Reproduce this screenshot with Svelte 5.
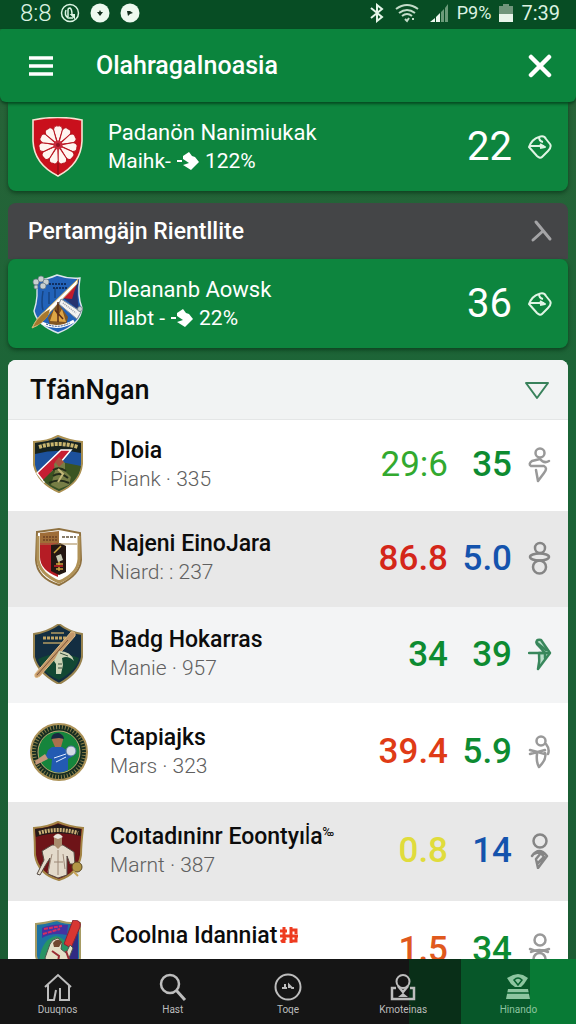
<script>
  const matches = [
    { id: 'flower', name: 'Padanön Nanimiukak', label: 'Maihk-', percent: '122%', score: 22 },
    { id: 'sash', name: 'Dleananb Aowsk', label: 'Illabt -', percent: '22%', score: 36 }
  ];

  const teams = [
    { id: 'tricolor', name: 'Dloia', rank: 'Piank · 335', rate: '29:6', rateColor: 'lime', points: '35', pointsColor: 'green', mark: 'drop', shade: 'white', size: 'small' },
    { id: 'split', name: 'Najeni EinoJara', rank: 'Niard: : 237', rate: '86.8', rateColor: 'red', points: '5.0', pointsColor: 'blue', mark: 'rings', shade: 'gray', size: 'medium' },
    { id: 'bat', name: 'Badg Hokarras', rank: 'Manie · 957', rate: '34', rateColor: 'green', points: '39', pointsColor: 'green', mark: 'arrow', shade: 'light', size: 'medium' },
    { id: 'round', name: 'Ctapiajks', rank: 'Mars · 323', rate: '39.4', rateColor: 'orange', points: '5.9', pointsColor: 'green', mark: 'leaf', shade: 'white', size: 'large' },
    { id: 'player', name: 'Coıtadıninr Eoontyıl̇a', sup: '‰', rank: 'Marnt · 387', rate: '0.8', rateColor: 'yellow', points: '14', pointsColor: 'blue', mark: 'pen', shade: 'gray', size: 'large' },
    { id: 'rainbow', name: 'Coolnıa Idanniat', badge: true, rank: '', rate: '1.5', rateColor: 'amber', points: '34', pointsColor: 'green', mark: 'tie', shade: 'white', size: 'large' }
  ];

  const tabs = [
    { id: 'home', label: 'Duuqnos' },
    { id: 'search', label: 'Hast' },
    { id: 'live', label: 'Toqe' },
    { id: 'profile', label: 'Kmoteinas' },
    { id: 'club', label: 'Hinando' }
  ];

  const petals = [0, 33, 65, 98, 131, 164, 196, 229, 262, 295, 327];

  let active = $state('club');
</script>

{#snippet crest(id)}
  <svg class="crest" viewBox="0 0 60 60" aria-hidden="true">
    {#if id === 'flower'}
      <path d="M5 3Q30-2 54 3V24Q53 47 30 59Q6 47 5 24Z" fill="#c9101c" stroke="#f6e3d2" stroke-width="1.6" />
      <path d="M30 42V58" stroke="#7d0a12" stroke-width="1" />
      {#each petals as angle}
        <path d="M30 27L25.500 13Q26 8 30 9Q34 8 34.500 13Z" fill="#fff5f0" stroke="#b8141f" stroke-width="1" transform="rotate({angle} 30 28)" />
      {/each}
      <circle cx="30" cy="28" r="4.6" fill="#c8283a" />
      <circle cx="30" cy="28" r="2" fill="#8e1523" />
    {:else if id === 'sash'}
      <path d="M8 7Q20 5 29 1Q40 5 52 4Q49 22 54 34Q53 50 30 59Q9 51 6 37Q11 22 8 7Z" fill="#2262b8" stroke="#dbe5ee" stroke-width="1.4" />
      <path d="M51 5L35 24L51 36Q48 18 51 5Z" fill="#26336f" />
      <path d="M50 6L33 24L44 25Z" fill="#c31b2c" />
      <path d="M15 17Q13 30 15 36M21 18V30M27 14V24" stroke="#174584" stroke-width="1.5" fill="none" />
      <path d="M21 10H38M25 14H39" stroke="#102f63" stroke-width="2" stroke-dasharray="2 1" />
      <path d="M4 54Q9 43 17 37L50 5L49 10L22 38Q15 50 4 54Z" fill="#fff" stroke="#d3b66b" stroke-width="1" />
      <path d="M5 53Q9 44 17 38L22 35L20 42Q14 50 5 53Z" fill="#a7782d" />
      <path d="M20 44L30 29L40 43L38 51H22Z" fill="#805522" />
      <path d="M22 47L26 35L30 42L34 35L38 48Z" fill="#dda545" />
      <path d="M30 28V48M27 36L35 45" stroke="#5a2d18" stroke-width="1.5" />
      <path d="M33 25L53 38L49 45L31 30Z" fill="#f3f3f2" stroke="#888f98" stroke-width="1" />
      <path d="M35 29L48 39" stroke="#9a9faa" stroke-width="1.5" stroke-dasharray="1 1" />
      <path d="M14 49Q30 57 46 47" stroke="#fff" stroke-width="3" fill="none" />
      <path d="M18 50Q30 55 42 49" stroke="#21427b" stroke-width="1" stroke-dasharray="2 1" fill="none" />
      <g fill="#c8d0d0" stroke="#657783" stroke-width=".7">
        <circle cx="8" cy="8" r="3" /><circle cx="13" cy="5" r="3" /><circle cx="18" cy="8" r="3" />
        <circle cx="8" cy="13" r="2" /><circle cx="15" cy="12" r="3" /><circle cx="52" cy="35" r="2.5" />
      </g>
    {:else if id === 'tricolor'}
      <path d="M6 7Q19 7 30 1Q42 6 54 7V29Q52 48 31 57Q10 48 6 30Z" fill="#1c519c" stroke="#aa9051" stroke-width="2" />
      <path d="M7 8Q19 7 30 3Q42 7 53 8V18Q30 13 7 19Z" fill="#17231f" />
      <path d="M11 12Q30 6 50 12" stroke="#c9b66f" stroke-width="4" stroke-dasharray="3 1" fill="none" />
      <path d="M33 15H43L16 47L9 38Z" fill="#c61e33" stroke="#fff" stroke-width="1.5" />
      <path d="M33 27L53 31Q50 48 31 56Q20 51 15 45Z" fill="#3b5422" />
      <path d="M23 50L27 36L26 29L31 23L37 28L37 36L43 42L41 50L31 54Z" fill="#777e46" />
      <path d="M27 27L31 22L36 27L31 32Z" fill="#a8503f" />
      <path d="M25 35Q31 31 38 36M25 41Q32 36 40 43M21 48Q31 43 41 48" stroke="#242d1b" stroke-width="2" fill="none" />
      <path d="M30 34L35 39L30 47" stroke="#c3b879" stroke-width="2" fill="none" />
    {:else if id === 'split'}
      <path d="M9 4L31 1L52 5L53 32Q52 47 31 57Q9 50 8 32Z" fill="#fff" stroke="#8f7140" stroke-width="2" />
      <path d="M12 15H30V49Q12 42 12 29Z" fill="#b51c25" />
      <path d="M12 5L31 3V15H12Z" fill="#9f6d38" />
      <path d="M15 9H29M15 12H29" stroke="#6e4123" stroke-width="1.5" stroke-dasharray="2 1" />
      <path d="M34 9H48" stroke="#887d6a" stroke-width="2" stroke-dasharray="3 1" />
      <path d="M23 17L32 15L38 18V44L31 47L23 43Z" fill="#241713" />
      <path d="M26 25L33 18M28 36H35M28 41H35M31 27V43" stroke="#d0a640" stroke-width="1.5" />
      <path d="M28 28L33 26L35 32L30 34Z" fill="#c9cbb8" />
      <path d="M26 38H35" stroke="#a21d20" stroke-width="2" />
      <path d="M10 8V32Q12 46 31 54Q50 46 51 31V8" fill="none" stroke="#b09257" stroke-width="3" />
      <path d="M12 16H49" stroke="#a2834d" stroke-width="1" />
    {:else if id === 'bat'}
      <path d="M6 10Q20 8 31 0Q41 8 54 10V33Q51 49 31 60Q10 49 6 33Z" fill="#132e41" stroke="#98834f" stroke-width="2" />
      <path d="M10 35Q31 25 51 34Q49 46 31 56Q14 49 10 35Z" fill="#124833" />
      <path d="M15 14H40" stroke="#c0a464" stroke-width="3" stroke-dasharray="3 1" />
      <path d="M23 9H36M15 19H36" stroke="#b39b61" stroke-width="1.5" />
      <path d="M43 8Q48 7 47 12L12 52Q6 56 7 50Z" fill="#c4996a" stroke="#e0bd86" stroke-width="1" />
      <path d="M9 51L40 16" stroke="#775239" stroke-width="1" />
      <path d="M31 27Q43 27 46 37Q40 31 34 34L35 41L33 50H28L28 40L26 37Z" fill="#cdd4b7" />
      <path d="M32 29L40 32M30 40H34M30 44H34" stroke="#39503d" stroke-width="1" />
    {:else if id === 'round'}
      <circle cx="31" cy="30" r="28" fill="#172d21" stroke="#ad9359" stroke-width="2" />
      <circle cx="31" cy="30" r="25" fill="none" stroke="#8c804b" stroke-width="4" stroke-dasharray="1 2" />
      <circle cx="31" cy="30" r="21" fill="#16853c" stroke="#bdac72" stroke-width="1" />
      <path d="M24 25L34 25L40 29L46 28L45 34L40 37V48Q30 53 23 48L24 37L17 36L20 28Z" fill="#235ab2" />
      <path d="M24 18Q25 12 31 12Q36 12 35 18L33 25H27Z" fill="#a9704e" />
      <path d="M23 17Q24 10 31 11Q36 13 36 17L31 16Z" fill="#172840" />
      <path d="M17 32L7 39L8 43L20 37Z" fill="#c4977b" />
      <circle cx="43" cy="29" r="5" fill="#d5dbe5" stroke="#5676a0" />
      <path d="M26 36L38 32M28 40L38 35" stroke="#e3ecff" stroke-width="1" />
    {:else if id === 'player'}
      <path d="M6 7Q20 6 30 1Q42 6 55 7Q53 24 53 34Q50 53 31 59Q10 53 7 34Q7 22 6 7Z" fill="#6e1418" stroke="#a28445" stroke-width="2" />
      <path d="M7 8Q20 7 30 3Q42 7 53 8V15Q30 9 8 16Z" fill="#241a18" />
      <path d="M11 12Q30 6 50 12" stroke="#cbb177" stroke-width="4" stroke-dasharray="2 1" fill="none" />
      <path d="M24 24L35 24L46 31L47 43L42 43L39 35L39 54L30 57L20 53L22 37L17 45L12 54L9 53L16 39L14 30Z" fill="#e3dacb" stroke="#554b43" stroke-width="1" />
      <path d="M26 15Q30 10 34 15V24L30 28L26 24Z" fill="#a88c6e" />
      <path d="M25 16Q30 10 35 16L30 18Z" fill="#eae6df" />
      <path d="M30 29V54M24 33L20 51M35 33L37 48M26 41H35" stroke="#9c8877" stroke-width="1" />
      <circle cx="49" cy="46" r="5" fill="#b29645" stroke="#5c4a24" />
      <path d="M45 50L50 55" stroke="#c6a45a" stroke-width="2" />
    {:else}
      <path d="M8 4Q19 3 29 0Q38 4 52 3V38Q49 53 31 59Q12 53 8 36Z" fill="#1d72a3" stroke="#a69b63" stroke-width="2" />
      <path d="M14 8Q24 3 40 5L39 15Q24 12 14 18Z" fill="#4333a2" />
      <path d="M16 9L34 6M15 14L32 9" stroke="#d52d62" stroke-width="2" stroke-dasharray="4 1" />
      <path d="M11 40Q14 19 28 16Q42 19 46 41L31 55Z" fill="#279464" />
      <path d="M42 16L50 14V42L37 48Z" fill="#302b83" />
      <path d="M45 0Q54 0 52 7L43 28L36 24Z" fill="#d83632" stroke="#842538" />
      <path d="M17 38L22 24Q24 19 30 18L34 23L33 29L38 33L42 25L45 28L39 43L33 56L21 49Z" fill="#e3dfc6" stroke="#4e584e" stroke-width="1" />
      <path d="M25 23Q29 17 34 22L31 27H26Z" fill="#70492f" />
      <path d="M24 31L31 36L29 47M38 31L44 48" stroke="#982d34" stroke-width="2" fill="none" />
    {/if}
  </svg>
{/snippet}

{#snippet mark(kind)}
  <svg class="mark {kind}" viewBox="0 0 24 36" aria-hidden="true">
    {#if kind === 'drop'}
      <circle cx="12" cy="6" r="4.500" />
      <path d="M21 14Q16 17 12 12Q8 13 4 14Q0 17 3 19H16Q20 21 16 26L10 34L8 23" />
    {:else if kind === 'rings'}
      <circle cx="12" cy="8" r="5" />
      <ellipse cx="11.500" cy="17" rx="9.500" ry="3.500" />
      <circle cx="11.500" cy="27" r="6.500" />
    {:else if kind === 'arrow'}
      <path d="M11 17Q12 25 10 33L22 17L13 4Q7 3 9 8Q13 12 17 17Z" fill="#b9dfca" />
      <path d="M1 17H21M9 7L18 14M17 17V22" />
    {:else if kind === 'leaf'}
      <circle cx="13" cy="7" r="4.500" />
      <path d="M2 16L17 20M2 20L17 16M9 20Q8 28 11 33Q19 25 17 19M18 10Q22 15 20 20" />
    {:else if kind === 'pen'}
      <circle cx="12" cy="8" r="6.500" />
      <path d="M4 23Q11 13 19 23L10 35L8 26L13 20L16 24L10 30M6 21Q12 18 17 21" />
    {:else}
      <circle cx="12" cy="8" r="5.500" />
      <path d="M2 17Q11 21 21 17M3 20Q11 16 20 20" />
      <ellipse cx="11.500" cy="27" rx="6" ry="6" />
    {/if}
  </svg>
{/snippet}

<div class="app">
  <div class="status">
    <div class="status-group">
      <span class="carrier">8:8</span>
      <svg width="20" height="20" viewBox="0 0 20 20" fill="none" stroke="#dcf5e3">
        <circle cx="10" cy="10" r="8.500" stroke-width="1.500" />
        <path d="M8 14V7Q8 5 10 5Q12 6 12 12M6 7Q4 12 8 15H13" stroke-width="1.500" />
        <path d="M12 12H14V14Z" stroke-width="2" />
      </svg>
      <svg class="spaced" width="20" height="20" viewBox="0 0 20 20">
        <circle cx="10" cy="10" r="9.500" fill="#edf9ef" />
        <path d="M7 9H9L10 7L11 9H13L10 13Z" fill="#102c1b" />
      </svg>
      <svg class="spaced" width="20" height="20" viewBox="0 0 20 20">
        <circle cx="10" cy="10" r="9.500" fill="#edf9ef" />
        <path d="M7 8H10L13 10L10 11L8 13Z" fill="#102c1b" />
      </svg>
    </div>
    <div class="status-group">
      <svg width="16" height="20" viewBox="0 0 16 20" fill="none" stroke="#e5f5e9" stroke-width="2">
        <path d="M2 5L13 14L8 18V2L13 6L2 15" />
      </svg>
      <svg class="spaced" width="24" height="20" viewBox="0 0 24 20" fill="none" stroke="#c3dcc9" stroke-width="2">
        <path d="M1 6Q12-2 23 6M4 10Q12 4 20 10M7 13Q12 9 17 13M10 16L12 18L14 15M17 16H19" />
      </svg>
      <svg class="spaced" width="20" height="20" viewBox="0 0 20 20">
        <path d="M1 19L6 15V19ZM7 14L11 10V19H7Z" fill="#eef8ef" />
        <path d="M12 9L15 6V19H12ZM16 5L19 1V19H16Z" fill="#6b9b79" />
      </svg>
      <span class="battery">P9%</span>
      <svg width="14" height="20" viewBox="0 0 14 20">
        <path d="M0 3H4V1H10V3H14V11H0Z" fill="#70957b" />
        <path d="M0 11H14V19H0Z" fill="#e8f4ea" />
      </svg>
      <span class="clock">7:39</span>
    </div>
  </div>

  <header>
    <button class="icon-button" aria-label="Menu">
      <svg width="24" height="24" viewBox="0 0 24 24" stroke="#fff" stroke-width="3.500">
        <path d="M0 4H24M0 12H24M0 20H24" />
      </svg>
    </button>
    <h1>OlahragaInoasia</h1>
    <button class="icon-button" aria-label="Close">
      <svg width="24" height="24" viewBox="0 0 24 24" stroke="#fff" stroke-width="4.500" stroke-linecap="round">
        <path d="M3 3L21 21M21 3L3 21" />
      </svg>
    </button>
  </header>

  <main>
    {#each matches as match, i}
      {#if i === 1}
        <div class="section-title">
          <h2>Pertamgäjn Rientllite</h2>
          <button class="icon-button" aria-label="Collapse">
            <svg width="24" height="24" viewBox="0 0 24 24" fill="none" stroke="#a4a4a6" stroke-width="3" stroke-linecap="round">
              <path d="M6 3L20 20M13 12L3 21" />
            </svg>
          </button>
        </div>
      {/if}
      <article class="match">
        {@render crest(match.id)}
        <div class="info">
          <h3>{match.name}</h3>
          <p>
            {match.label}
            <svg width="22" height="18" viewBox="0 0 22 18">
              <path d="M0 8H5V10H0ZM6 4L12 0L15 4L18 5L22 10L14 18L6 13L12 11L6 7Z" fill="#fff" />
            </svg>
            {match.percent}
          </p>
        </div>
        <strong>{match.score}</strong>
        <svg class="match-icon" viewBox="0 0 24 24" fill="none" stroke="#dff5e4" stroke-width="2" stroke-linejoin="round">
          <path d="M1 12Q4 4 11 2Q16 0 18 4L22 9Q24 12 20 16L14 22Q12 24 9 21Z" />
          <path d="M1 11H16M12 9L17 12L12 13M11 2Q11 6 15 7" />
        </svg>
      </article>
    {/each}

    <section class="ranking">
      <div class="ranking-title">
        <h2>TfänNgan</h2>
        <button class="icon-button" aria-label="Filter">
          <svg width="26" height="20" viewBox="0 0 26 20" fill="none" stroke="#39825b" stroke-width="2" stroke-linejoin="round">
            <path d="M2 3H24L13 18Z" />
          </svg>
        </button>
      </div>
      <ul>
        {#each teams as team}
          <li class="{team.shade} {team.size}">
            {@render crest(team.id)}
            <div class="info">
              <h3>
                {team.name}{#if team.sup}<sup>{team.sup}</sup>{/if}
                {#if team.badge}
                  <svg class="badge" width="20" height="20" viewBox="0 0 20 20" fill="none" stroke="#ee3b20" stroke-width="3">
                    <path d="M1 6H8M5 2V18M1 11H19M2 17L7 13M12 2V18M12 5H17V9M12 16H17V11" />
                  </svg>
                {/if}
              </h3>
              <p>{team.rank}</p>
            </div>
            <span class="value {team.rateColor}">{team.rate}</span>
            <span class="value points {team.pointsColor}">{team.points}</span>
            {@render mark(team.mark)}
          </li>
        {/each}
      </ul>
    </section>
  </main>

  <nav>
    {#each tabs as tab}
      <a href="#{tab.id}" class:active={active === tab.id} onclick={() => (active = tab.id)}>
        <svg width="28" height="28" viewBox="0 0 28 28" fill="none" stroke="currentColor" stroke-width="2">
          {#if tab.id === 'home'}
            <path d="M1 14L14 2L27 14M4 12V27H10L12 17M16 15V27H25V12" />
          {:else if tab.id === 'search'}
            <circle cx="11" cy="11" r="9" stroke-width="2.500" />
            <path d="M17 17L26 27" stroke-width="3" />
          {:else if tab.id === 'live'}
            <circle cx="14" cy="14" r="12.500" />
            <path d="M8 15H13M11 11V16M15 15V12L18 15H20" />
          {:else if tab.id === 'profile'}
            <circle cx="14" cy="8.500" r="6.500" />
            <path d="M7 15H3V26H25V15H21M9 13L14 19L19 13" stroke-width="2.500" />
            <path d="M9 24L14 20L19 24Z" fill="currentColor" stroke="none" />
          {:else}
            <path d="M9 2L14 1L19 2L24 5L20 11L17 14H11L7 11L3 5ZM4 16H24L26 26H2Z" fill="currentColor" stroke="none" />
            <path d="M10 7Q14 3 18 7L14 12ZM3 20H25" stroke="#07602e" stroke-width="1.500" />
          {/if}
        </svg>
        <span>{tab.label}</span>
      </a>
    {/each}
  </nav>
</div>

<style>
  :global(body) {
    margin: 0;
    font-family: Roboto, 'Liberation Sans', sans-serif;
  }

  .app {
    display: flex;
    flex-direction: column;
    height: 100vh;
    background: linear-gradient(#2b6238, #1b6537 40%, #1b5b33);
    color: #fff;
  }

  h1, h2, h3, p, ul {
    margin: 0;
    padding: 0;
  }

  svg {
    flex-shrink: 0;
  }

  .status {
    display: flex;
    justify-content: space-between;
    align-items: center;
    height: 29px;
    flex-shrink: 0;
    padding: 0 16px 4px 20px;
    box-sizing: border-box;
    background: #074d24;
    color: #dcf3e2;
    font-size: 22px;
  }

  .status-group {
    display: flex;
    align-items: center;
    gap: 8px;
  }

  .status-group .carrier {
    font-size: 24px;
    font-weight: 300;
  }

  .spaced {
    margin-left: 2px;
  }

  .status-group .battery {
    font-size: 18px;
  }

  .status-group .clock {
    font-size: 20px;
  }

  header {
    display: flex;
    align-items: center;
    height: 73px;
    flex-shrink: 0;
    padding: 0 24px 0 29px;
    box-sizing: border-box;
    background: #0b843d;
    border-radius: 2px 2px 6px 6px;
    box-shadow: 0 2px 3px rgba(0, 50, 20, 0.7);
    z-index: 1;
  }

  h1 {
    flex: 1;
    margin-left: 43px;
    font-size: 25px;
    font-weight: 500;
  }

  .icon-button {
    display: flex;
    padding: 0;
    border: 0;
    background: none;
    cursor: pointer;
  }

  main {
    flex: 1;
    min-height: 0;
    padding: 0 8px;
    overflow-y: auto;
    scrollbar-width: none;
  }

  .match {
    display: flex;
    align-items: center;
    min-height: 89px;
    margin-bottom: 12px;
    padding: 0 16px 0 20px;
    background: #0d853e;
    border-radius: 8px;
    box-shadow: 0 2px 4px rgba(0, 40, 15, 0.6);
  }

  .match:first-child {
    border-radius: 0 0 8px 8px;
  }

  .crest {
    width: 60px;
    height: 60px;
  }

  .info {
    flex: 1;
    min-width: 0;
    margin-left: 20px;
    white-space: nowrap;
  }

  .match h3 {
    font-size: 22px;
    line-height: 28px;
    font-weight: 400;
  }

  .match p {
    display: flex;
    align-items: center;
    gap: 6px;
    font-size: 21px;
    line-height: 28px;
  }

  .match strong {
    font-size: 40px;
    font-weight: 400;
  }

  .match-icon {
    width: 24px;
    height: 24px;
    margin-left: 16px;
  }

  .section-title {
    display: flex;
    justify-content: space-between;
    align-items: center;
    height: 56px;
    padding: 0 14px 0 20px;
    background: #444547;
    border-radius: 8px 8px 0 0;
  }

  .section-title h2 {
    font-size: 23px;
    font-weight: 500;
  }

  .ranking {
    border-radius: 8px 8px 0 0;
    background: #fff;
    color: #0c0c0c;
    overflow: hidden;
  }

  .ranking-title {
    display: flex;
    justify-content: space-between;
    align-items: center;
    height: 60px;
    padding: 0 18px 0 22px;
    box-sizing: border-box;
    background: #f1f3f3;
    border-bottom: 1px solid #e4e6e6;
  }

  .ranking-title h2 {
    font-size: 27px;
    font-weight: 500;
  }

  ul {
    list-style: none;
  }

  li {
    display: flex;
    align-items: center;
    padding: 0 16px 2px 20px;
    box-sizing: border-box;
  }

  li.small {
    min-height: 91px;
  }

  li.medium {
    min-height: 96px;
  }

  li.large {
    min-height: 99px;
  }

  li.gray {
    background: #e8e8e8;
  }

  li.light {
    background: #f3f4f5;
  }

  li .info {
    margin-left: 22px;
  }

  li h3 {
    font-size: 23px;
    line-height: 29px;
    font-weight: 500;
  }

  li p {
    min-height: 29px;
    color: #606060;
    font-size: 21px;
    line-height: 29px;
    font-weight: 300;
  }

  sup {
    font-size: 12px;
    line-height: 1;
    vertical-align: 8px;
  }

  .badge {
    margin-left: -4px;
    vertical-align: -2px;
  }

  .value {
    font-size: 35px;
    font-weight: 500;
    text-align: right;
  }

  .points {
    width: 64px;
  }

  .lime {
    color: #32a92f;
    font-weight: 400;
  }

  .green {
    color: #0d8b31;
  }

  .red {
    color: #d42619;
  }

  .orange {
    color: #df3b16;
  }

  .amber {
    color: #e0591d;
  }

  .yellow {
    color: #e0dc3c;
  }

  .blue {
    color: #1453ad;
  }

  .mark {
    width: 24px;
    height: 36px;
    margin-left: 16px;
    fill: none;
    stroke: #999;
    stroke-width: 2.5;
    stroke-linejoin: round;
    stroke-linecap: round;
  }

  .mark.rings,
  .mark.pen {
    stroke: #858585;
  }

  .mark.arrow {
    stroke: #39875c;
  }

  nav {
    display: flex;
    height: 65px;
    flex-shrink: 0;
    background: linear-gradient(90deg, #151515 0 71%, #092f18 71% 80%, #075729 80% 92%, #087a35 92%);
  }

  nav a {
    flex: 1;
    display: flex;
    flex-direction: column;
    align-items: center;
    padding-top: 14px;
    gap: 3px;
    color: #bdbdbd;
    font-size: 10px;
    line-height: 12px;
    text-decoration: none;
  }

  nav a.active {
    color: #8dc5a0;
  }
</style>
